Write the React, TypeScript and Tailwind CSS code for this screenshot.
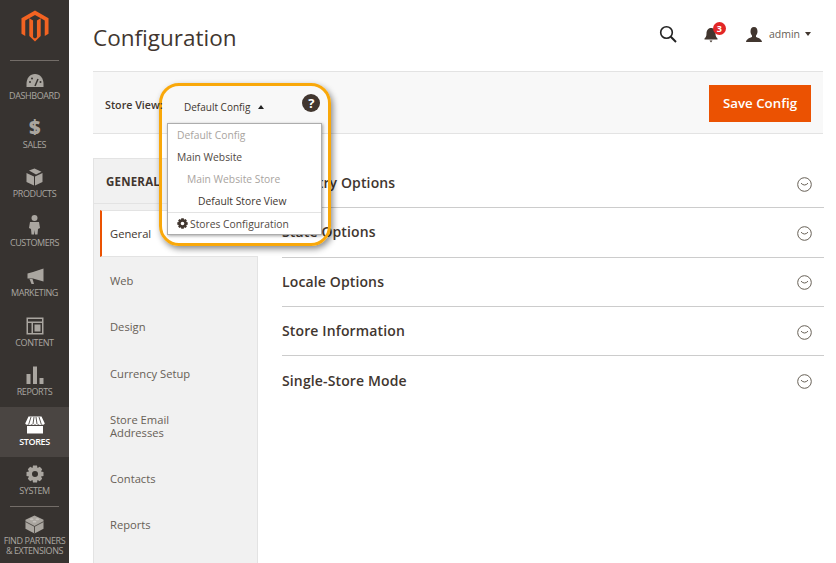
import { ReactNode } from "react";

const iconFill = "#aaa6a0";

function MagentoLogo() {
  return (
    <svg width="28" height="32" viewBox="0 0 29 33">
      <path
        fill="#f26322"
        d="M14.5 0.5 L28.5 8.5 V24.5 L24.6 26.8 V10.8 L14.5 5 L4.4 10.8 V26.8 L0.5 24.5 V8.5 Z M12.5 10.8 V28.2 L14.5 29.4 L16.5 28.2 V10.8 L20.4 8.6 V26.8 L14.5 32.5 L8.6 26.8 V8.6 Z"
      />
    </svg>
  );
}

const navItems: { label: ReactNode; icon: ReactNode; active?: boolean; h: string }[] = [
  {
    label: "DASHBOARD",
    h: "h-[50px]",
    icon: (
      <svg width="18" height="15" viewBox="0 0 18 15">
        <path fill={iconFill} d="M9 1 C4 1 0.5 5 0.5 11 V14 H17.5 V11 C17.5 5 14 1 9 1 Z" />
        <path stroke="#373330" strokeWidth="1.5" d="M9 13 L12 6" />
        <circle cx="4" cy="9" r="1" fill="#373330" />
        <circle cx="6" cy="5.5" r="1" fill="#373330" />
        <circle cx="14.5" cy="9" r="1" fill="#373330" />
      </svg>
    ),
  },
  {
    label: "SALES",
    h: "h-[49px]",
    icon: <span className="text-[20px] leading-[20px] font-extrabold text-[#aaa6a0]">$</span>,
  },
  {
    label: "PRODUCTS",
    h: "h-[49px]",
    icon: (
      <svg width="17" height="18" viewBox="0 0 17 18">
        <path fill={iconFill} d="M0.5 5 L8 8.5 V17.5 L0.5 14 Z M9 8.5 L16.5 5 V14 L9 17.5 Z" />
        <path fill={iconFill} d="M3 2.5 L8.5 0.5 L15.5 3.8 L10 6.5 Z" />
      </svg>
    ),
  },
  {
    label: "CUSTOMERS",
    h: "h-[49px]",
    icon: (
      <svg width="11" height="20" viewBox="0 0 11 20">
        <circle cx="5.5" cy="3" r="3" fill={iconFill} />
        <path fill={iconFill} d="M1 7 H10 L11 13 L9 14 L8.5 19.5 H6 L5.5 15 L5 19.5 H2.5 L2 14 L0 13 Z" />
      </svg>
    ),
  },
  {
    label: "MARKETING",
    h: "h-[50px]",
    icon: (
      <svg width="18" height="17" viewBox="0 0 18 17">
        <path fill={iconFill} d="M17.5 0.5 V13.5 L7 10.5 H1.5 V5.5 L7 4 Z" />
        <path fill={iconFill} d="M3.5 11 H6.5 L8 16 H5.5 Z" />
      </svg>
    ),
  },
  {
    label: "CONTENT",
    h: "h-[50px]",
    icon: (
      <svg width="18" height="18" viewBox="0 0 18 18">
        <path
          fill={iconFill}
          fillRule="evenodd"
          d="M0.5 0.5 H17.5 V17.5 H0.5 Z M2 2 V4.5 H16 V2 Z M2 6 V16 H5.5 V6 Z M7 6 V16 H16 V6 Z"
        />
        <rect x="8.5" y="7.5" width="6" height="7" fill={iconFill} />
      </svg>
    ),
  },
  {
    label: "REPORTS",
    h: "h-[49px]",
    icon: (
      <svg width="18" height="18" viewBox="0 0 18 18">
        <path fill={iconFill} d="M0.5 8 H4.5 V18 H0.5 Z M7 0.5 H11 V18 H7 Z M13.5 12 H17.5 V18 H13.5 Z" />
      </svg>
    ),
  },
  {
    label: "STORES",
    active: true,
    h: "h-[50px]",
    icon: (
      <svg width="20" height="18" viewBox="0 0 20 18">
        <path
          fill="#fff"
          d="M3.5 0.5 H16.5 L19.8 7.5 Q18.5 9.5 16.8 8.2 Q15 9.8 13.2 8.2 Q11.5 9.8 10 8.2 Q8.5 9.8 6.8 8.2 Q5 9.8 3.2 8.2 Q1.5 9.5 0.2 7.5 Z"
        />
        <path stroke="#4a4542" strokeWidth="0.9" d="M6 1 L3.8 8 M9 1 L8 8 M11 1 L12 8 M14 1 L16.2 8" />
        <path fill="#fff" d="M2 10 H18 V17.5 H2 Z" />
      </svg>
    ),
  },
  {
    label: "SYSTEM",
    h: "h-[49px]",
    icon: (
      <svg width="18" height="18" viewBox="0 0 18 18">
        <path
          fill={iconFill}
          fillRule="evenodd"
          d="M7 0.5 H11 L11.5 3 L13.8 1.8 L16.2 4.2 L15 6.5 L17.5 7 V11 L15 11.5 L16.2 13.8 L13.8 16.2 L11.5 15 L11 17.5 H7 L6.5 15 L4.2 16.2 L1.8 13.8 L3 11.5 L0.5 11 V7 L3 6.5 L1.8 4.2 L4.2 1.8 L6.5 3 Z M9 6 A3 3 0 1 0 9 12 A3 3 0 1 0 9 6 Z"
        />
      </svg>
    ),
  },
];

function Sidebar() {
  return (
    <aside className="w-[69px] shrink-0 bg-[#373330] flex flex-col items-stretch h-[563px] overflow-hidden">
      <div className="h-[60px] flex justify-center pt-[10px] shrink-0">
        <MagentoLogo />
      </div>
      <div className="mx-[10px] h-px bg-[#736d68] shrink-0" />
      {navItems.map((item, i) => (
        <div
          key={i}
          className={`${item.h} shrink-0 flex flex-col items-center justify-end pb-[9px] text-[9px] tracking-[-0.4px] leading-[12px] ${
            item.active ? "bg-[#4a4542] text-white font-semibold" : "text-[#aaa6a0]"
          }`}
        >
          <div className="flex items-end justify-center h-[21px] mb-[2px]">{item.icon}</div>
          <span>{item.label}</span>
        </div>
      ))}
      <div className="mx-[10px] h-px bg-[#736d68] shrink-0" />
      <div className="flex flex-col items-center pt-[8px] text-[9px] tracking-[-0.4px] leading-[10px] text-[#aaa6a0] text-center">
        <svg width="19" height="19" viewBox="0 0 20 20">
          <path fill={iconFill} d="M10 0.5 L19.5 5 V14.5 L10 19.5 L0.5 14.5 V5 Z" />
          <path stroke="#373330" strokeWidth="0.8" fill="none" d="M0.5 7 L10 12 L19.5 7 M10 12 V19.5" />
          <ellipse cx="7" cy="4.5" rx="2" ry="1" fill="#c4c0bb" />
          <ellipse cx="13" cy="4.5" rx="2" ry="1" fill="#c4c0bb" />
          <ellipse cx="10" cy="7" rx="2" ry="1" fill="#c4c0bb" />
        </svg>
        <span className="mt-[2px] whitespace-nowrap">FIND PARTNERS</span>
        <span className="whitespace-nowrap">&amp; EXTENSIONS</span>
      </div>
    </aside>
  );
}

function TopBar() {
  return (
    <header className="h-[72px] pl-[24px] pr-[25px] flex items-start justify-between">
      <h1 className="text-[22.5px] leading-[30px] pt-[23px] text-[#41362f]">Configuration</h1>
      <div className="flex items-center pt-[25px]">
        <svg width="18" height="18" viewBox="0 0 18 18" fill="none" stroke="#222" strokeWidth="1.6">
          <circle cx="7.5" cy="7.5" r="5.8" />
          <path d="M11.8 11.8 L17 17" strokeWidth="2" />
        </svg>
        <div className="relative ml-[27px] w-[14px] h-[16px] mt-[1px]">
          <svg width="14" height="16" viewBox="0 0 14 16">
            <path
              fill="#41362f"
              d="M7 1 C4 1 2.5 3.5 2.5 6.5 C2.5 9.5 1.5 10.5 0.5 11.5 V12.5 H13.5 V11.5 C12.5 10.5 11.5 9.5 11.5 6.5 C11.5 3.5 10 1 7 1 Z M5.5 13.5 H8.5 L7 15.5 Z"
            />
          </svg>
          <span className="absolute left-[9px] top-[-5px] w-[13px] h-[13px] rounded-full bg-[#e22626] text-white text-[9px] leading-[13px] font-bold text-center">
            3
          </span>
        </div>
        <svg className="ml-[28px]" width="16" height="15" viewBox="0 0 16 15">
          <path
            fill="#41362f"
            d="M8 0 C5.5 0 4.5 2 4.5 4.5 C4.5 6.5 5.5 8 6 8.5 V10 C4 11 0.5 11.5 0 15 H16 C15.5 11.5 12 11 10 10 V8.5 C10.5 8 11.5 6.5 11.5 4.5 C11.5 2 10.5 0 8 0 Z"
          />
        </svg>
        <span className="ml-[7px] text-[10.5px] leading-[15px] text-[#676056]">admin</span>
        <span className="ml-[5px] w-0 h-0 border-x-[3px] border-x-transparent border-t-[4px] border-t-[#41362f]" />
      </div>
    </header>
  );
}

function Toolbar() {
  return (
    <div className="h-[63px] mr-[13px] ml-[24px] bg-[#f8f8f8] border-y border-[#e3e3e3] flex items-center justify-between pl-[12px] pr-[12px]">
      <span className="relative z-10 mt-[5px] text-[10.7px] font-semibold text-[#41362f]">Store View:</span>
      <button className="mt-[2px] w-[102px] h-[37px] bg-[#eb5202] text-white text-[13.3px] font-semibold">
        Save Config
      </button>
    </div>
  );
}

const tabs: { label: ReactNode; h: string; active?: boolean }[] = [
  { label: "General", h: "h-[47px]", active: true },
  { label: "Web", h: "h-[46px]" },
  { label: "Design", h: "h-[47px]" },
  { label: "Currency Setup", h: "h-[46px]" },
  { label: <>Store Email<br />Addresses</>, h: "h-[59px]" },
  { label: "Contacts", h: "h-[46px]" },
  { label: "Reports", h: "h-[46px]" },
];

function Tabs() {
  return (
    <div className="w-[165px] shrink-0 bg-[#f1f1f1] border-l border-r border-t border-[#e3e3e3] h-[405px]">
      <div className="h-[44px] mt-[1px] flex items-center pl-[12px] text-[11.5px] font-bold text-[#41362f] tracking-[0.2px] border-b border-[#e3e3e3]">
        GENERAL
      </div>
      <div className="pl-[6px] pt-[6px]">
        {tabs.map((t, i) => (
          <div
            key={i}
            className={`${t.h} flex items-center text-[11.2px] leading-[13px] ${
              t.active
                ? "bg-white border-l-2 border-[#eb5202] pl-[8px] text-[#41362f] border-y border-y-[#e3e3e3] -mr-px"
                : "pl-[10px] text-[#676056]"
            }`}
          >
            <span>{t.label}</span>
          </div>
        ))}
      </div>
    </div>
  );
}

function Chevron() {
  return (
    <svg className="mt-[3px]" width="15" height="15" viewBox="0 0 15 15" fill="none" stroke="#676056" strokeWidth="1">
      <circle cx="7.5" cy="7.5" r="6.8" />
      <path d="M4 6.2 Q7.5 9.8 11 6.2" />
    </svg>
  );
}

const sections = ["Country Options", "State Options", "Locale Options", "Store Information", "Single-Store Mode"];

function Sections() {
  return (
    <div className="w-[566px] pl-[24px] pt-[1px]">
      {sections.map((s, i) => (
        <div
          key={s}
          className={`h-[49.3px] pb-[1px] flex items-center justify-between pr-[12px] ${
            i < 4 ? "border-b border-[#cccccc]" : ""
          }`}
        >
          <span className="text-[14px] font-semibold text-[#41362f] tracking-[0.13px]">{s}</span>
          <Chevron />
        </div>
      ))}
    </div>
  );
}

function StoreSwitcher() {
  return (
    <div className="absolute left-[159px] top-[83px] w-[172px] h-[163px] rounded-[20px] border-[3px] border-[#f9a80a] shadow-[2px_3px_6px_rgba(0,0,0,0.45)]">
      <div className="flex items-center pl-[22px] pt-[13px] text-[10px] leading-[16px] text-[#41362f]">
        <span>Default Config</span>
        <span className="ml-[8px] w-0 h-0 border-x-[3px] border-x-transparent border-b-[4px] border-b-[#222]" />
        <span className="ml-[38px] -mt-[8px] w-[18px] h-[18px] rounded-full bg-[#41362f] text-white text-[13px] leading-[18px] font-bold text-center">
          ?
        </span>
      </div>
      <div className="absolute left-[5px] top-[37px] w-[155px] h-[112px] bg-white border border-[#adadad] shadow-[1px_1px_3px_rgba(0,0,0,0.35)] text-[10.3px] leading-[22px]">
        <div className="pl-[9px] h-[22px] text-[#a9a4a0]">Default Config</div>
        <div className="pl-[9px] h-[22px] text-[#514943]">Main Website</div>
        <div className="pl-[19px] h-[22px] text-[#a9a4a0]">Main Website Store</div>
        <div className="pl-[30px] h-[22px] text-[#41362f]">Default Store View</div>
        <div className="h-[22px] border-t border-[#e3e3e3] pl-[9px] flex items-center text-[#514943]">
          <svg className="mr-[2px]" width="11" height="11" viewBox="0 0 18 18">
            <path
              fill="#41362f"
              fillRule="evenodd"
              d="M7 0.5 H11 L11.5 3 L13.8 1.8 L16.2 4.2 L15 6.5 L17.5 7 V11 L15 11.5 L16.2 13.8 L13.8 16.2 L11.5 15 L11 17.5 H7 L6.5 15 L4.2 16.2 L1.8 13.8 L3 11.5 L0.5 11 V7 L3 6.5 L1.8 4.2 L4.2 1.8 L6.5 3 Z M9 6 A3 3 0 1 0 9 12 A3 3 0 1 0 9 6 Z"
            />
          </svg>
          Stores Configuration
        </div>
      </div>
    </div>
  );
}

export default function App() {
  return (
    <div className="relative w-[836px] h-[563px] overflow-hidden bg-white flex font-['Open_Sans',sans-serif]">
      <Sidebar />
      <main className="flex-1 flex flex-col">
        <TopBar />
        <Toolbar />
        <div className="flex ml-[24px] mt-[24px]">
          <Tabs />
          <Sections />
        </div>
      </main>
      <StoreSwitcher />
    </div>
  );
}
